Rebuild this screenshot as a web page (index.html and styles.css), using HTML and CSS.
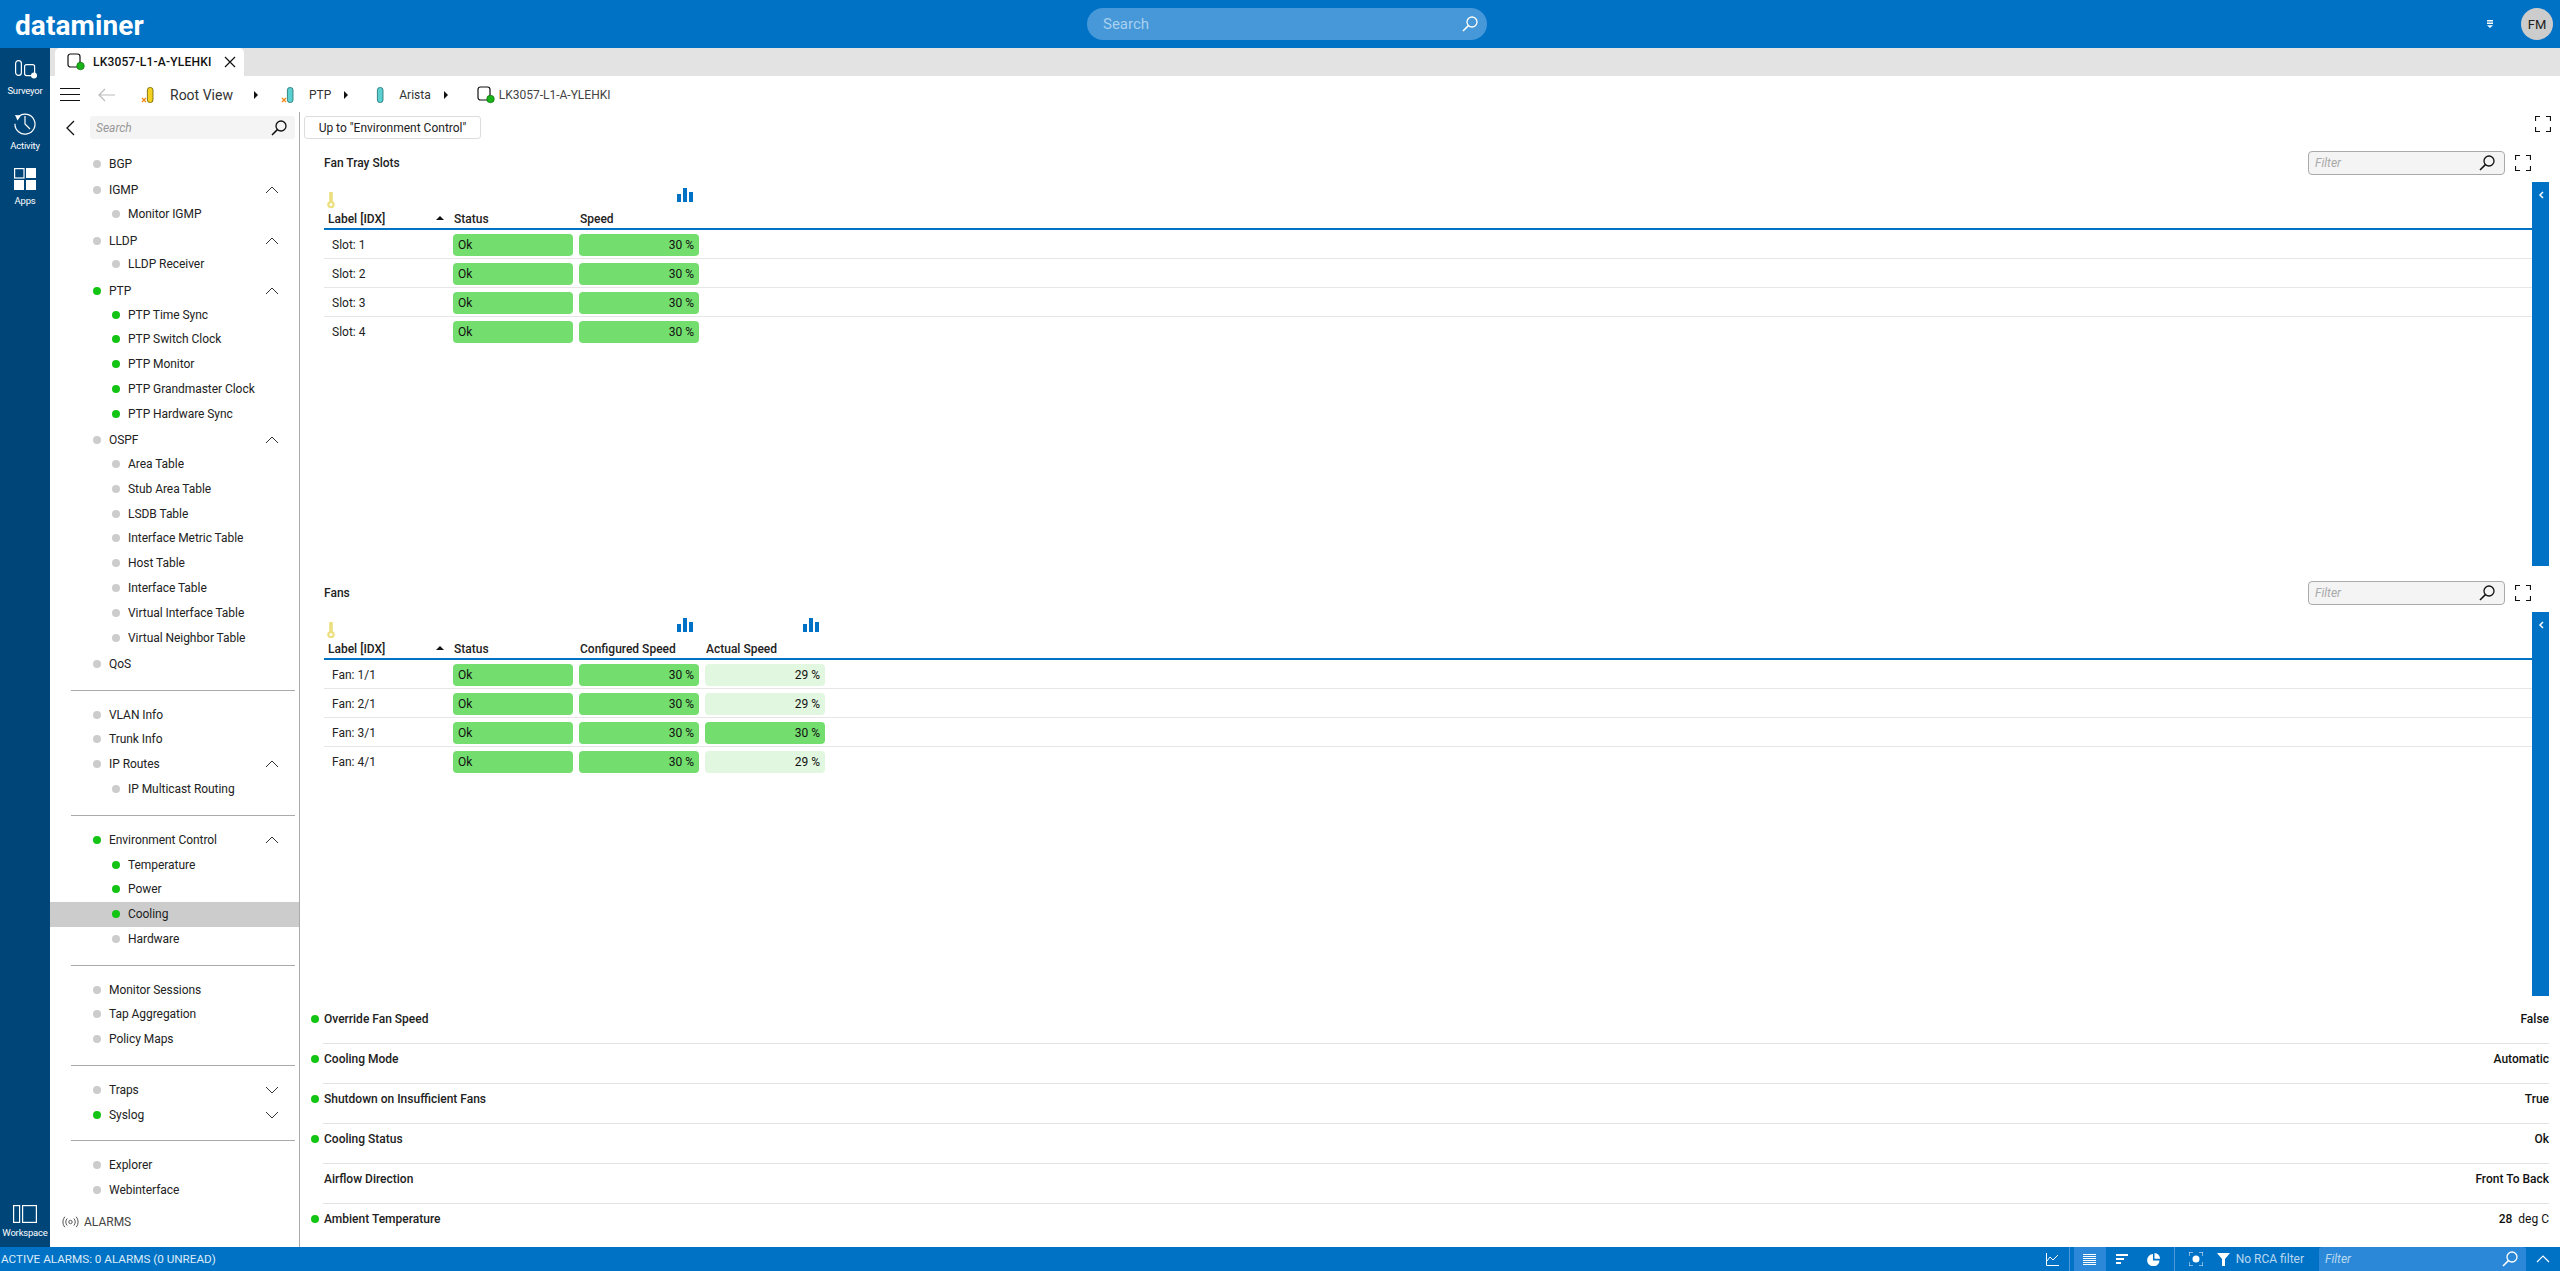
FILE: index.html
```html
<!DOCTYPE html>
<html>
<head>
<meta charset="utf-8" />
<title>dataminer</title>
<link rel="stylesheet" href="styles.css">
</head>

<body>
<svg class="defs" width="0" height="0">
	<symbol id="i-search" viewBox="0 0 16 16"><circle cx="10" cy="6" r="5" fill="none" stroke="currentColor" stroke-width="1.3"/><path d="M6.4 9.6 1 15" fill="none" stroke="currentColor" stroke-width="1.5"/></symbol>
	<symbol id="i-full" viewBox="0 0 16 16"><path d="M0.5 5V0.5H5M11 0.5H15.5V5M15.5 11V15.5H11M5 15.5H0.5V11" fill="none" stroke="#111" stroke-width="1.2"/></symbol>
	<symbol id="i-bars" viewBox="0 0 16 14"><path d="M0 6h4v8H0zM6 0h4v14H6zM12 4h4v10h-4z" fill="#0072c6"/></symbol>
	<symbol id="i-key" viewBox="0 0 8 16"><path d="M2.200 0h3.600v9.300a3.800 3.800 0 1 1-3.600 0z" fill="#ecdf7f"/><circle cx="4" cy="12.400" r="1.500" fill="#fff"/></symbol>
	<symbol id="i-up" viewBox="0 0 14 8"><path d="M1 7 7 1l6 6" fill="none" stroke="#333" stroke-width="1"/></symbol>
	<symbol id="i-down" viewBox="0 0 14 8"><path d="M1 1l6 6 6-6" fill="none" stroke="#333" stroke-width="1"/></symbol>
	<symbol id="i-element" viewBox="0 0 18 18"><rect x="1" y="1" width="12" height="13" rx="2.500" fill="#fff" stroke="#111" stroke-width="1.200"/><circle cx="13.500" cy="13" r="3.800" fill="#17b317" stroke="#0b5f0b" stroke-width=".6"/></symbol>
	<symbol id="i-mark" viewBox="0 0 16 18"><path d="M4 12l4 4M8 12l-4 4" stroke="#f08a1d" stroke-width="1.400"/></symbol>
</svg>

<div class="app">
	<header class="topbar">
		<div class="logo">dataminer</div>
		<div class="global-search">
			<span>Search</span>
			<svg class="ic16"><use href="#i-search"/></svg>
		</div>
		<div class="top-right">
			<svg class="top-menu" width="8" height="8" viewBox="0 0 8 8"><path d="M1 0h6v1.400H1zM1 2.600h6V4H1zM1 5.200h6L4 8z" fill="#fff"/></svg>
			<div class="avatar">FM</div>
		</div>
	</header>

	<div class="middle">
		<nav class="rail">
			<a class="rail-item">
				<svg width="26" height="26" viewBox="0 0 26 26"><rect x="3.600" y="2.600" width="5.800" height="14.800" rx="2.900" fill="none" stroke="#fff" stroke-width="1.200"/><rect x="12.600" y="6.600" width="10" height="11" rx="2" fill="none" stroke="#fff" stroke-width="1.200"/><circle cx="22" cy="17.500" r="3" fill="#fff"/></svg>
				<span>Surveyor</span>
			</a>
			<a class="rail-item">
				<svg width="26" height="26" viewBox="0 0 26 26"><path d="M6.800 3.300a10 10 0 1 1-3.800 7.500" fill="none" stroke="#fff" stroke-width="1.200"/><path d="M3 2l6 .5-3.500 5z" fill="#fff"/><path d="M13 3v8l5 5" fill="none" stroke="#fff" stroke-width="1.200"/></svg>
				<span>Activity</span>
			</a>
			<a class="rail-item">
				<svg width="22" height="26" viewBox="0 0 22 26"><rect x=".6" y=".6" width="9.400" height="9.400" fill="none" stroke="#fff" stroke-width="1.200"/><path d="M12 0h10v10H12zM0 12h10v10H0zM12 12h10v10H12z" fill="#fff"/></svg>
				<span>Apps</span>
			</a>
			<a class="rail-item workspace">
				<svg width="24" height="18" viewBox="0 0 24 18"><rect x=".6" y=".6" width="6" height="16.800" fill="none" stroke="#fff" stroke-width="1.200"/><rect x="9.600" y=".6" width="13.800" height="16.800" fill="none" stroke="#fff" stroke-width="1.200"/></svg>
				<span>Workspace</span>
			</a>
		</nav>

		<div class="workspace-area">
			<div class="tabstrip">
				<div class="tab">
					<svg class="ic18"><use href="#i-element"/></svg>
					<span class="tab-title">LK3057-L1-A-YLEHKI</span>
					<svg width="12" height="12" viewBox="0 0 12 12"><path d="M1 1l10 10M11 1 1 11" stroke="#111" stroke-width="1.200"/></svg>
				</div>
			</div>

			<div class="crumbs">
				<div class="burger"><i></i><i></i><i></i></div>
				<svg class="back" width="17" height="14" viewBox="0 0 17 14"><path d="M7 1 1 7l6 6M1 7h16" fill="none" stroke="#bbb" stroke-width="1.200"/></svg>
				<svg class="view-ic root-ic" width="16" height="18" viewBox="0 0 16 18"><rect x="9.400" y="1.500" width="5.600" height="15" rx="2.500" fill="#f2d21e" stroke="#6b5a00" stroke-width=".8"/><use href="#i-mark" width="16" height="18"/></svg>
				<span class="crumb-root">Root View</span>
				<i class="crumb-arrow arrow-root"></i>
				<svg class="view-ic ptp-ic" width="16" height="18" viewBox="0 0 16 18"><rect x="9.400" y="1.500" width="5.600" height="15" rx="2.500" fill="#5ccfd0" stroke="#1f6f70" stroke-width=".8"/><use href="#i-mark" width="16" height="18"/></svg>
				<span class="crumb-ptp">PTP</span>
				<i class="crumb-arrow arrow-ptp"></i>
				<svg class="view-ic arista-ic" width="16" height="18" viewBox="0 0 16 18"><rect x="9.400" y="1.500" width="5.600" height="15" rx="2.500" fill="#5ccfd0" stroke="#1f6f70" stroke-width=".8"/></svg>
				<span class="crumb-arista">Arista</span>
				<i class="crumb-arrow arrow-arista"></i>
				<svg class="ic18 element-ic"><use href="#i-element"/></svg>
				<span class="crumb-element">LK3057-L1-A-YLEHKI</span>
			</div>

			<div class="body">
				<aside class="sidebar">
					<div class="side-search-row">
						<svg class="side-back" width="10" height="16" viewBox="0 0 10 16"><path d="M9 1 2 8l7 7" fill="none" stroke="#111" stroke-width="1.300"/></svg>
						<div class="side-search">
							<span>Search</span>
							<svg class="ic16"><use href="#i-search"/></svg>
						</div>
					</div>

					<ul class="tree">
						<li class="item"><b></b>BGP</li>
						<li class="item head"><b></b>IGMP<svg class="chev"><use href="#i-up"/></svg></li>
						<li class="item sub"><b></b>Monitor IGMP</li>
						<li class="item head"><b></b>LLDP<svg class="chev"><use href="#i-up"/></svg></li>
						<li class="item sub"><b></b>LLDP Receiver</li>
						<li class="item head on"><b></b>PTP<svg class="chev"><use href="#i-up"/></svg></li>
						<li class="item sub on"><b></b>PTP Time Sync</li>
						<li class="item sub on"><b></b>PTP Switch Clock</li>
						<li class="item sub on"><b></b>PTP Monitor</li>
						<li class="item sub on"><b></b>PTP Grandmaster Clock</li>
						<li class="item sub on"><b></b>PTP Hardware Sync</li>
						<li class="item head"><b></b>OSPF<svg class="chev"><use href="#i-up"/></svg></li>
						<li class="item sub"><b></b>Area Table</li>
						<li class="item sub"><b></b>Stub Area Table</li>
						<li class="item sub"><b></b>LSDB Table</li>
						<li class="item sub"><b></b>Interface Metric Table</li>
						<li class="item sub"><b></b>Host Table</li>
						<li class="item sub"><b></b>Interface Table</li>
						<li class="item sub"><b></b>Virtual Interface Table</li>
						<li class="item sub"><b></b>Virtual Neighbor Table</li>
						<li class="item gap"><b></b>QoS</li>
						<li class="sep"></li>
						<li class="item"><b></b>VLAN Info</li>
						<li class="item"><b></b>Trunk Info</li>
						<li class="item"><b></b>IP Routes<svg class="chev"><use href="#i-up"/></svg></li>
						<li class="item sub"><b></b>IP Multicast Routing</li>
						<li class="sep"></li>
						<li class="item on"><b></b>Environment Control<svg class="chev"><use href="#i-up"/></svg></li>
						<li class="item sub on"><b></b>Temperature</li>
						<li class="item sub on"><b></b>Power</li>
						<li class="item sub on selected"><b></b>Cooling</li>
						<li class="item sub"><b></b>Hardware</li>
						<li class="sep"></li>
						<li class="item"><b></b>Monitor Sessions</li>
						<li class="item"><b></b>Tap Aggregation</li>
						<li class="item"><b></b>Policy Maps</li>
						<li class="sep"></li>
						<li class="item gap"><b></b>Traps<svg class="chev"><use href="#i-down"/></svg></li>
						<li class="item on"><b></b>Syslog<svg class="chev"><use href="#i-down"/></svg></li>
						<li class="sep"></li>
						<li class="item"><b></b>Explorer</li>
						<li class="item"><b></b>Webinterface</li>
					</ul>

					<div class="alarms">
						<svg width="17" height="12" viewBox="0 0 17 12"><circle cx="8.500" cy="6" r="1.700" fill="none" stroke="#555"/><path d="M5.200 2.500a5 5 0 0 0 0 7M11.800 2.500a5 5 0 0 1 0 7M2.800.8a8 8 0 0 0 0 10.400M14.200.8a8 8 0 0 1 0 10.400" fill="none" stroke="#555"/></svg>
						<span>ALARMS</span>
					</div>
				</aside>

				<main class="content">
					<div class="up-row">
						<button class="up-btn">Up to "Environment Control"</button>
						<svg class="ic16 up-full"><use href="#i-full"/></svg>
					</div>

					<section class="panel">
						<div class="panel-head">
							<h2>Fan Tray Slots</h2>
							<div class="filter"><span>Filter</span><svg class="ic16"><use href="#i-search"/></svg></div>
							<svg class="ic16"><use href="#i-full"/></svg>
						</div>
						<div class="panel-body">
							<div class="table-wrap">
								<div class="col-icons">
									<svg class="key" width="8" height="16"><use href="#i-key"/></svg>
									<svg class="bars speed-bars" width="16" height="14"><use href="#i-bars"/></svg>
								</div>
								<table>
									<thead><tr><th>Label [IDX]<i class="sort"></i></th><th>Status</th><th>Speed</th><th></th><th></th></tr></thead>
									<tbody>
										<tr><td>Slot: 1</td><td><div class="cell green">Ok</div></td><td><div class="cell green num">30 %</div></td><td></td><td></td></tr>
										<tr><td>Slot: 2</td><td><div class="cell green">Ok</div></td><td><div class="cell green num">30 %</div></td><td></td><td></td></tr>
										<tr><td>Slot: 3</td><td><div class="cell green">Ok</div></td><td><div class="cell green num">30 %</div></td><td></td><td></td></tr>
										<tr><td>Slot: 4</td><td><div class="cell green">Ok</div></td><td><div class="cell green num">30 %</div></td><td></td><td></td></tr>
									</tbody>
								</table>
							</div>
							<div class="side-tab"><svg width="6" height="8" viewBox="0 0 6 8"><path d="M5 1 2 4l3 3" fill="none" stroke="#fff" stroke-width="1.500"/></svg></div>
						</div>
					</section>

					<section class="panel">
						<div class="panel-head">
							<h2>Fans</h2>
							<div class="filter"><span>Filter</span><svg class="ic16"><use href="#i-search"/></svg></div>
							<svg class="ic16"><use href="#i-full"/></svg>
						</div>
						<div class="panel-body">
							<div class="table-wrap">
								<div class="col-icons">
									<svg class="key" width="8" height="16"><use href="#i-key"/></svg>
									<svg class="bars speed-bars" width="16" height="14"><use href="#i-bars"/></svg>
									<svg class="bars actual-bars" width="16" height="14"><use href="#i-bars"/></svg>
								</div>
								<table>
									<thead><tr><th>Label [IDX]<i class="sort"></i></th><th>Status</th><th>Configured Speed</th><th>Actual Speed</th><th></th></tr></thead>
									<tbody>
										<tr><td>Fan: 1/1</td><td><div class="cell green">Ok</div></td><td><div class="cell green num">30 %</div></td><td><div class="cell pale num">29 %</div></td><td></td></tr>
										<tr><td>Fan: 2/1</td><td><div class="cell green">Ok</div></td><td><div class="cell green num">30 %</div></td><td><div class="cell pale num">29 %</div></td><td></td></tr>
										<tr><td>Fan: 3/1</td><td><div class="cell green">Ok</div></td><td><div class="cell green num">30 %</div></td><td><div class="cell green num">30 %</div></td><td></td></tr>
										<tr><td>Fan: 4/1</td><td><div class="cell green">Ok</div></td><td><div class="cell green num">30 %</div></td><td><div class="cell pale num">29 %</div></td><td></td></tr>
									</tbody>
								</table>
							</div>
							<div class="side-tab"><svg width="6" height="8" viewBox="0 0 6 8"><path d="M5 1 2 4l3 3" fill="none" stroke="#fff" stroke-width="1.500"/></svg></div>
						</div>
					</section>

					<div class="props">
						<div class="prop on"><b></b><span>Override Fan Speed</span><em>False</em></div>
						<div class="prop on"><b></b><span>Cooling Mode</span><em>Automatic</em></div>
						<div class="prop on"><b></b><span>Shutdown on Insufficient Fans</span><em>True</em></div>
						<div class="prop on"><b></b><span>Cooling Status</span><em>Ok</em></div>
						<div class="prop"><b></b><span>Airflow Direction</span><em>Front To Back</em></div>
						<div class="prop on"><b></b><span>Ambient Temperature</span><em>28 <small>deg C</small></em></div>
					</div>
				</main>
			</div>
		</div>
	</div>

	<footer class="statusbar">
		<div class="status-text">ACTIVE ALARMS: 0 ALARMS (0 UNREAD)</div>
		<div class="status-tools">
			<svg class="tool chart" width="13" height="13" viewBox="0 0 13 13"><path d="M.5 0v12.500H13M1 8l3-4 3 3 5-5" fill="none" stroke="#fff"/></svg>
			<div class="tool-group">
				<div class="tool-btn active"><svg width="13" height="11" viewBox="0 0 13 11"><path d="M0 .5h13M0 2.500h13M0 4.500h13M0 6.500h13M0 8.500h13M0 10.500h13" stroke="#fff"/></svg></div>
				<div class="tool-btn"><svg width="12" height="11" viewBox="0 0 12 11"><path d="M0 0h12v2H0zM0 4h8v2H0zM0 8h5v2H0z" fill="#fff"/></svg></div>
				<div class="tool-btn"><svg width="13" height="13" viewBox="0 0 13 13"><path d="M6 1v6.500h6.500A6.200 6.200 0 1 1 6 1z" fill="#fff"/><path d="M7.500 0a5.600 5.600 0 0 1 5.500 5.800H7.500z" fill="#fff"/></svg></div>
			</div>
			<div class="tool-group rca">
				<svg width="14" height="14" viewBox="0 0 14 14"><path d="M0 4V1.500A1.500 1.500 0 0 1 1.500 0H4M10 0h2.500A1.500 1.500 0 0 1 14 1.500V4M14 10v2.500a1.500 1.500 0 0 1-1.500 1.500H10M4 14H1.500A1.500 1.500 0 0 1 0 12.500V10" fill="none" stroke="#fff"/><circle cx="7" cy="7" r="3.500" fill="#fff"/></svg>
				<svg class="funnel" width="13" height="13" viewBox="0 0 13 13"><path d="M0 0h13L8 6v7H5V6z" fill="#fff"/></svg>
				<span>No RCA filter</span>
			</div>
			<div class="status-filter"><span>Filter</span><svg class="ic16"><use href="#i-search"/></svg></div>
			<svg class="status-up" width="14" height="8" viewBox="0 0 14 8"><path d="M1 7l6-6 6 6" fill="none" stroke="#fff" stroke-width="1.200"/></svg>
		</div>
	</footer>
</div>
</body>
</html>
```

FILE: styles.css
```css
*{
	padding: 0;
	margin: 0;
	box-sizing: border-box;
}
html, body{
	height: 100%;
	overflow: hidden;
}
body{
	font-family: Roboto, "Noto Sans", sans-serif;
	font-size: 12px;
	color: #222;
	background: #fff;
}
.defs{
	position: absolute;
}
.ic16{
	width: 16px;
	height: 16px;
	flex: none;
}
.ic18{
	width: 18px;
	height: 18px;
	flex: none;
}
.app{
	display: flex;
	flex-direction: column;
	height: 100%;
}

/* top */
.topbar{
	display: flex;
	align-items: center;
	position: relative;
	flex: none;
	height: 48px;
	background: #0072c6;
	color: #fff;
}
.logo{
	margin: 2px 0 0 15px;
	font-size: 28px;
	font-weight: 700;
	letter-spacing: 0.1px;
}
.global-search{
	display: flex;
	align-items: center;
	justify-content: space-between;
	position: absolute;
	left: 1087px;
	top: 8px;
	width: 400px;
	height: 32px;
	padding: 0 9px 0 16px;
	border-radius: 16px;
	background: #4698d9;
	font-size: 15px;
	color: #a9d0ee;
}
.global-search svg{
	color: #fff;
}
.top-right{
	display: flex;
	align-items: center;
	gap: 27px;
	margin-left: auto;
	margin-right: 7px;
}
.avatar{
	display: flex;
	align-items: center;
	justify-content: center;
	width: 32px;
	height: 32px;
	border-radius: 50%;
	background: #ccc;
	font-size: 13px;
	color: #222;
}

.middle{
	display: flex;
	flex: 1;
	min-height: 0;
}

/* left rail */
.rail{
	display: flex;
	flex-direction: column;
	align-items: center;
	flex: none;
	width: 50px;
	padding-top: 10px;
	background: #004578;
	color: #fff;
}
.rail-item{
	display: flex;
	flex-direction: column;
	align-items: center;
	flex: none;
	height: 55px;
	font-size: 9.5px;
}
.rail-item span{
	line-height: 14px;
	letter-spacing: -0.2px;
}
.rail-item.workspace{
	margin-top: auto;
	height: 42px;
}
.rail-item.workspace span{
	margin-top: 3px;
}

.workspace-area{
	display: flex;
	flex-direction: column;
	flex: 1;
	min-width: 0;
}
.tabstrip{
	flex: none;
	height: 28px;
	padding-left: 5px;
	background: #e3e3e3;
}
.tab{
	display: flex;
	align-items: center;
	width: 189px;
	height: 28px;
	padding-left: 12px;
	border-radius: 5px 5px 0 0;
	background: #fff;
}
.tab-title{
	width: 131px;
	margin-left: 8px;
	font-weight: 500;
	letter-spacing: 0.2px;
	color: #111;
}

/* breadcrumb */
.crumbs{
	display: flex;
	align-items: center;
	flex: none;
	height: 36px;
	padding: 1px 0 0 10px;
}
.burger{
	width: 20px;
}
.burger i{
	display: block;
	height: 1px;
	margin-bottom: 5px;
	background: #111;
}
.burger i:last-child{
	margin-bottom: 0;
}
.back{
	margin-left: 18px;
}
.view-ic{
	flex: none;
}
.root-ic{
	margin-left: 23px;
}
.crumb-root{
	margin-left: 16px;
	font-size: 14px;
	color: #333;
}
.crumb-arrow{
	width: 0;
	height: 0;
	border-left: 4px solid #111;
	border-top: 4px solid transparent;
	border-bottom: 4px solid transparent;
}
.arrow-root{
	margin-left: 21px;
}
.ptp-ic{
	margin-left: 20px;
}
.crumb-ptp{
	margin-left: 15px;
	color: #333;
}
.arrow-ptp{
	margin-left: 13px;
}
.arista-ic{
	margin-left: 20px;
}
.crumb-arista{
	margin-left: 15px;
	color: #333;
}
.arrow-arista{
	margin-left: 13px;
}
.element-ic{
	margin-left: 29px;
}
.crumb-element{
	margin-left: 4px;
	color: #444;
}

.body{
	display: flex;
	flex: 1;
	min-height: 0;
}

/* tree */
.sidebar{
	display: flex;
	flex-direction: column;
	flex: none;
	width: 250px;
	border-right: 1px solid #aaa;
}
.side-search-row{
	display: flex;
	align-items: center;
	flex: none;
	height: 27px;
	padding: 4px 0 0 15px;
}
.side-search{
	display: flex;
	align-items: center;
	justify-content: space-between;
	width: 205px;
	height: 23px;
	margin-left: 15px;
	padding: 0 8px 0 6px;
	border-radius: 3px;
	background: #f4f4f4;
	font-style: italic;
	color: #999;
}
.side-search svg{
	color: #111;
}
.tree{
	list-style: none;
	flex: none;
	margin-top: 12.4px;
}
.item{
	display: flex;
	align-items: center;
	position: relative;
	height: 24.8px;
	padding-left: 43px;
	letter-spacing: -0.05px;
	color: #222;
}
.item b{
	flex: none;
	width: 8px;
	height: 8px;
	margin-right: 8px;
	border-radius: 50%;
	background: #ccc;
}
.item.on b{
	background: #14c414;
}
.item.gap{
	margin-top: 1.5px;
}
.item.head{
	height: 22.6px;
	margin-top: 2.9px;
}
.item.sub{
	padding-left: 62px;
}
.item.selected{
	background: #ccc;
}
.chev{
	position: absolute;
	left: 215px;
	top: 50%;
	width: 14px;
	height: 8px;
	margin-top: -4px;
}
.sep{
	height: 1px;
	margin: 13.3px 4px 11.6px 21px;
	background: #aaa;
}
.alarms{
	display: flex;
	align-items: center;
	gap: 5px;
	flex: none;
	margin-top: 12px;
	padding-left: 12px;
	color: #444;
}

/* main */
.content{
	display: flex;
	flex-direction: column;
	flex: 1;
	min-width: 0;
	padding-right: 11px;
}
.up-row{
	display: flex;
	align-items: center;
	justify-content: space-between;
	flex: none;
	height: 27px;
	padding: 4px 0 0 4px;
}
.up-full{
	margin: -7px -2px 0 0;
}
.up-btn{
	width: 177px;
	height: 23px;
	border: 1px solid #ddd;
	border-radius: 3px;
	background: #fff;
	font: inherit;
	color: #222;
}
.panel{
	flex: none;
	height: 430px;
}
.panel-head{
	display: flex;
	align-items: center;
	height: 24px;
	margin-top: 12px;
	padding: 0 18px 0 24px;
}
h2{
	font-size: 12px;
	font-weight: 500;
	color: #222;
}
.filter{
	display: flex;
	align-items: center;
	justify-content: space-between;
	width: 197px;
	height: 24px;
	margin-left: auto;
	margin-right: 10px;
	padding: 0 9px 0 6px;
	border: 1px solid #aaa;
	border-radius: 4px;
	background: #f4f4f4;
	font-style: italic;
	color: #aaa;
}
.filter svg{
	color: #111;
}
.panel-body{
	display: flex;
	height: 384px;
	margin-top: 7px;
}
.table-wrap{
	flex: 1;
	min-width: 0;
	padding-left: 24px;
}
.col-icons{
	position: relative;
	height: 28px;
}
.key{
	position: absolute;
	left: 3px;
	top: 10px;
}
.bars{
	position: absolute;
	top: 6px;
}
.speed-bars{
	left: 353px;
}
.actual-bars{
	left: 479px;
}
table{
	width: 100%;
	table-layout: fixed;
	border-collapse: collapse;
}
th{
	position: relative;
	width: 126px;
	height: 19px;
	padding-left: 4px;
	border-bottom: 2px solid #0072c6;
	text-align: left;
	font-weight: 500;
	color: #222;
}
th:last-child, td:last-child{
	width: auto;
}
.sort{
	position: absolute;
	left: 112px;
	top: 6px;
	width: 0;
	height: 0;
	border-left: 4px solid transparent;
	border-right: 4px solid transparent;
	border-bottom: 4px solid #111;
}
td{
	height: 29px;
	padding: 4px 3px 2px;
	border-bottom: 1px solid #e6e6e6;
}
tbody tr:last-child td{
	border-bottom: 0;
}
td:first-child{
	padding-left: 8px;
}
.cell{
	height: 22px;
	padding: 0 5px;
	border-radius: 4px;
	line-height: 22px;
	color: #111;
}
.green{
	background: #73de6e;
}
.pale{
	background: #e2f7df;
}
.num{
	text-align: right;
}
.side-tab{
	flex: none;
	width: 17px;
	padding: 9px 0 0 6px;
	background: #0072c6;
	line-height: 0;
}

/* parameter rows */
.props{
	flex: none;
	margin-top: 5px;
}
.prop{
	display: flex;
	align-items: center;
	height: 40px;
	margin-left: 23px;
	padding-bottom: 10px;
	border-bottom: 1px solid #e3e3e3;
	font-weight: 500;
	color: #222;
}
.prop:last-child{
	border-bottom: 0;
}
.prop b{
	flex: none;
	width: 8px;
	height: 8px;
	margin: 0 5px 0 -12px;
	border-radius: 50%;
}
.prop.on b{
	background: #14c414;
}
.prop em{
	margin-left: auto;
	font-style: normal;
	color: #111;
}
.prop small{
	margin-left: 3px;
	font-size: 12px;
	font-weight: 400;
}

/* bottom bar */
.statusbar{
	display: flex;
	align-items: center;
	justify-content: space-between;
	flex: none;
	height: 24px;
	background: #0072c6;
	color: #fff;
}
.status-text{
	margin-left: 1px;
	font-size: 11.7px;
	color: #dcebf7;
}
.status-tools{
	display: flex;
	align-items: center;
	height: 100%;
}
.tool-group{
	display: flex;
	align-items: center;
	height: 100%;
	padding-left: 4px;
	border-left: 1px solid #4698d9;
}
.chart{
	margin-right: 10px;
}
.tool-btn{
	display: flex;
	align-items: center;
	justify-content: center;
	width: 32px;
	height: 100%;
}
.tool-btn.active{
	background: #2b88d8;
}
.rca{
	margin-left: 4px;
	padding-left: 14px;
	color: #b8d8f0;
}
.funnel{
	margin-left: 14px;
}
.rca span{
	margin-left: 6px;
}
.status-filter{
	display: flex;
	align-items: center;
	justify-content: space-between;
	width: 207px;
	height: 100%;
	margin-left: 15px;
	padding: 0 8px 0 6px;
	border-radius: 3px 3px 0 0;
	background: #2b88d8;
	font-style: italic;
	color: #b8d8f0;
}
.status-filter svg{
	color: #fff;
}
.status-up{
	margin: 0 10px;
}
```
